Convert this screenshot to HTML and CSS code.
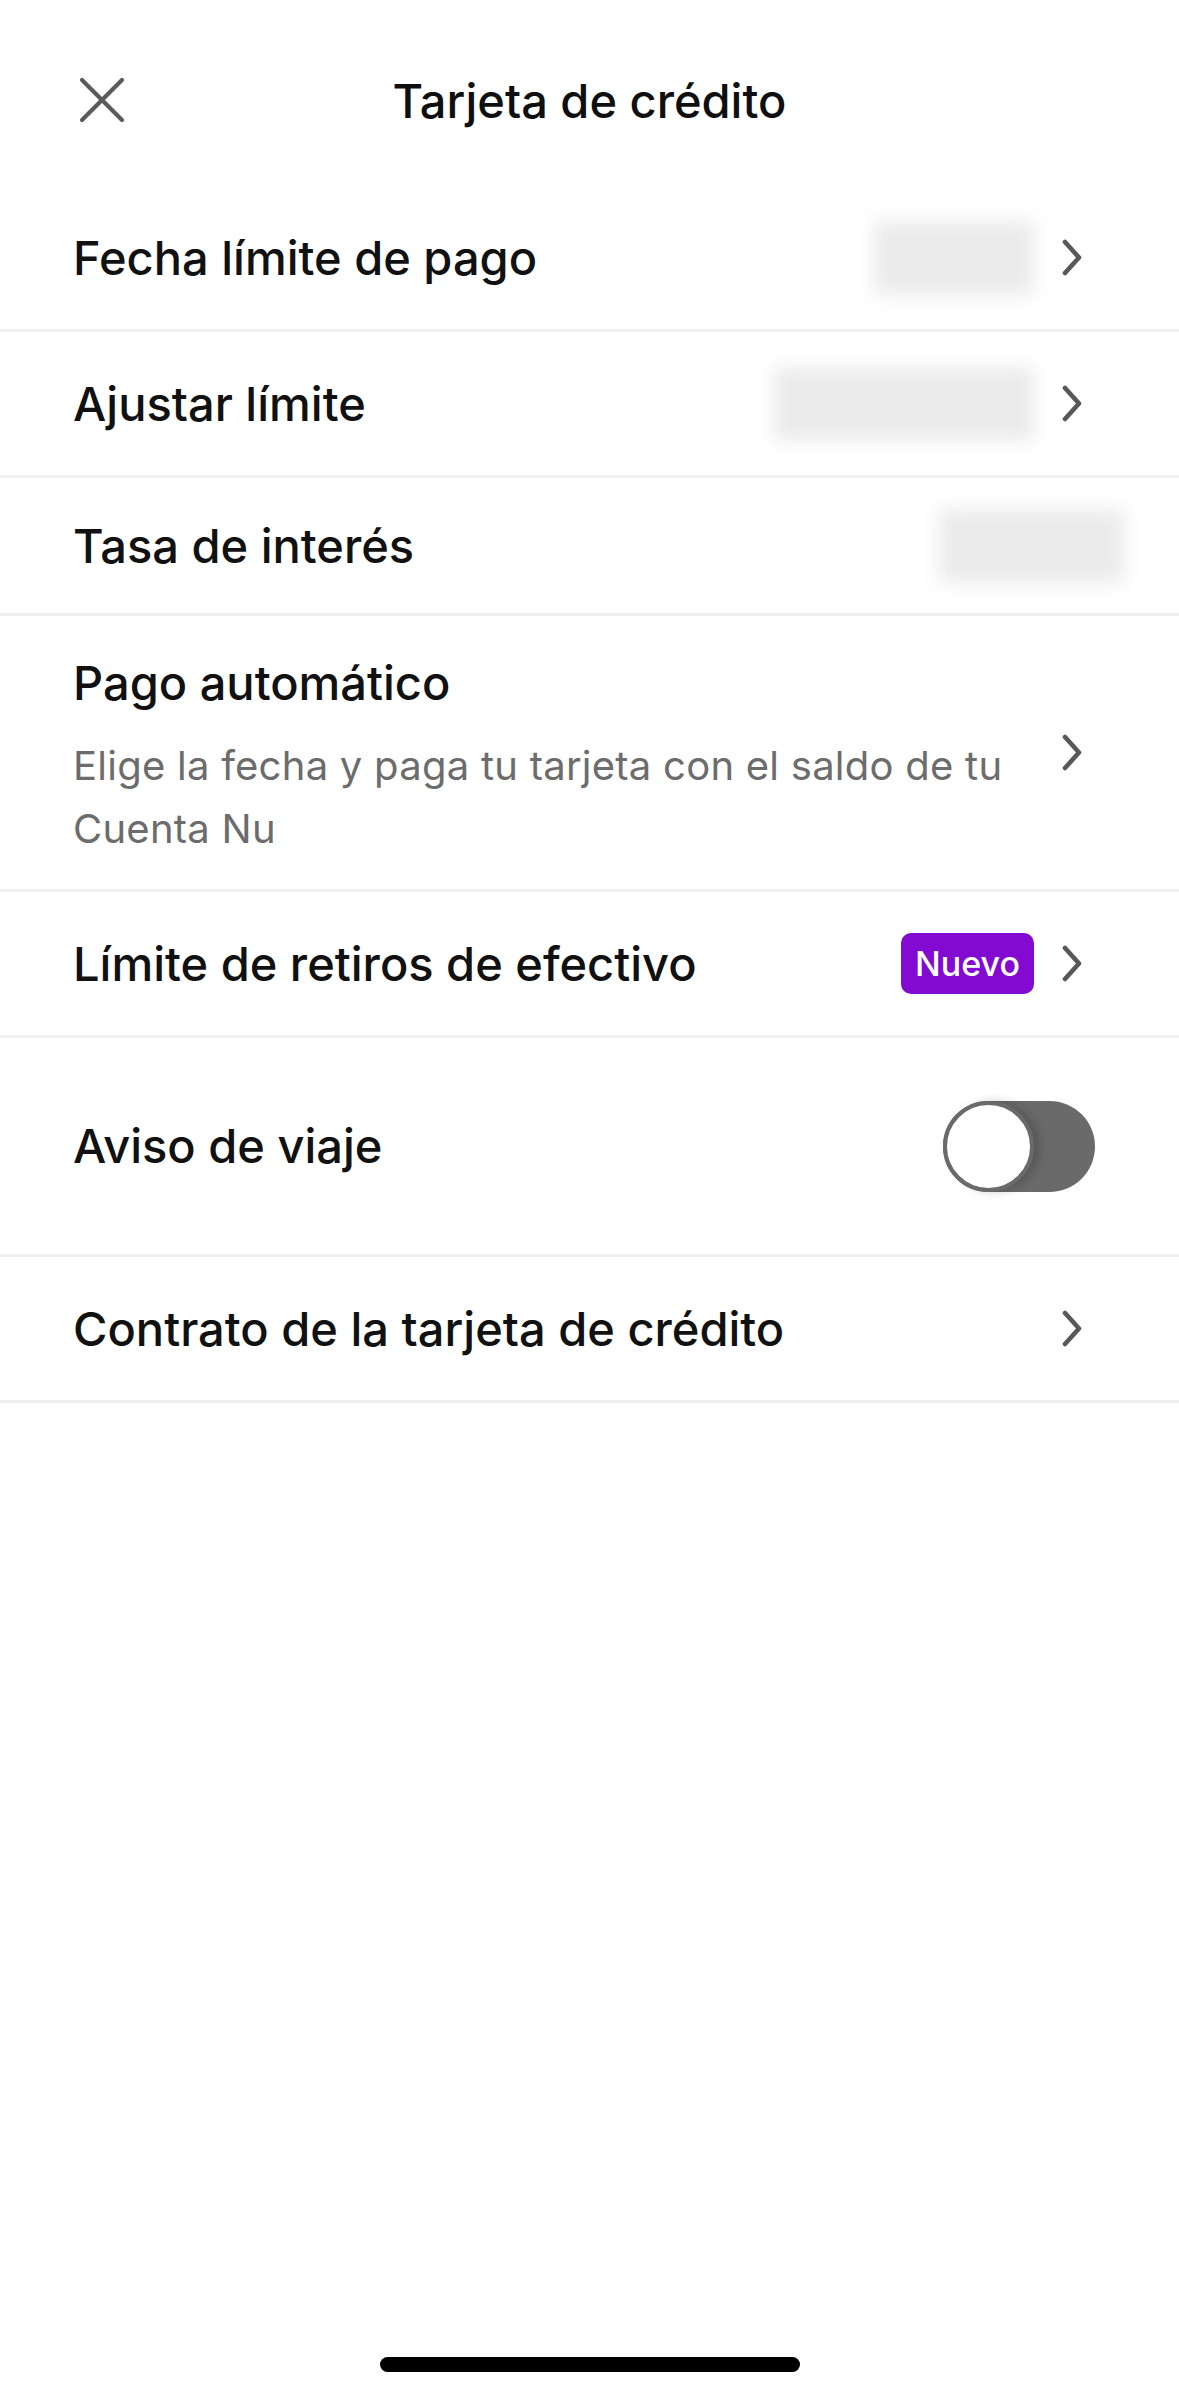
FILE: index.html
```html
<!DOCTYPE html>
<html lang="es">
<head>
  <meta charset="UTF-8" />
  <meta name="viewport" content="width=device-width, initial-scale=1" />
  <title>Tarjeta de crédito</title>
  <link rel="stylesheet" href="styles.css">
</head>
<body>
  <div class="screen">
    <header class="topbar">
      <button class="close-btn" aria-label="Cerrar">
        <svg width="46" height="46" viewBox="0 0 46 46">
          <path d="M3 3 L43 43 M43 3 L3 43" stroke="#5b5b5b" stroke-width="4.2" stroke-linecap="round" fill="none"/>
        </svg>
      </button>
      <h1 class="topbar-title">Tarjeta de crédito</h1>
    </header>

    <ul class="settings">
      <li class="row">
        <span class="label">Fecha límite de pago</span>
        <span class="redacted redacted-date"></span>
        <span class="chevron"><svg width="20" height="37" viewBox="0 0 20 37"><path d="M3 3 L17 18.5 L3 34" stroke="#585858" stroke-width="4.6" stroke-linecap="round" stroke-linejoin="round" fill="none"/></svg></span>
      </li>
      <li class="row">
        <span class="label">Ajustar límite</span>
        <span class="redacted redacted-limit"></span>
        <span class="chevron"><svg width="20" height="37" viewBox="0 0 20 37"><path d="M3 3 L17 18.5 L3 34" stroke="#585858" stroke-width="4.6" stroke-linecap="round" stroke-linejoin="round" fill="none"/></svg></span>
      </li>
      <li class="row row-plain">
        <span class="label">Tasa de interés</span>
        <span class="redacted redacted-rate"></span>
      </li>
      <li class="row row-tall">
        <div class="label-stack">
          <span class="label">Pago automático</span>
          <span class="hint">Elige la fecha y paga tu tarjeta con el saldo de tu Cuenta Nu</span>
        </div>
        <span class="chevron"><svg width="20" height="37" viewBox="0 0 20 37"><path d="M3 3 L17 18.5 L3 34" stroke="#585858" stroke-width="4.6" stroke-linecap="round" stroke-linejoin="round" fill="none"/></svg></span>
      </li>
      <li class="row">
        <span class="label">Límite de retiros de efectivo</span>
        <span class="badge">Nuevo</span>
        <span class="chevron"><svg width="20" height="37" viewBox="0 0 20 37"><path d="M3 3 L17 18.5 L3 34" stroke="#585858" stroke-width="4.6" stroke-linecap="round" stroke-linejoin="round" fill="none"/></svg></span>
      </li>
      <li class="row row-toggle">
        <span class="label">Aviso de viaje</span>
        <span class="toggle" role="switch" aria-checked="false"><span class="toggle-knob"></span></span>
      </li>
      <li class="row">
        <span class="label">Contrato de la tarjeta de crédito</span>
        <span class="chevron"><svg width="20" height="37" viewBox="0 0 20 37"><path d="M3 3 L17 18.5 L3 34" stroke="#585858" stroke-width="4.6" stroke-linecap="round" stroke-linejoin="round" fill="none"/></svg></span>
      </li>
    </ul>

    <div class="spacer"></div>
    <div class="home-indicator"></div>
  </div>
</body>
</html>
```

FILE: styles.css
```css
html, body {
  margin: 0;
  padding: 0;
  background: #ffffff;
  font-family: Inter, 'Noto Sans', sans-serif;
  color: #111111;
}

.screen {
  width: 1179px;
  min-height: 2396px;
  display: flex;
  flex-direction: column;
}

/* === Top bar === */
.topbar {
  height: 186px;
  box-sizing: border-box;
  padding-top: 12px;
  display: flex;
  align-items: center;
  justify-content: center;
  position: relative;
}

.close-btn {
  position: absolute;
  left: 79px;
  top: 77px;
  width: 46px;
  height: 46px;
  padding: 0;
  border: 0;
  background: none;
  display: flex;
}

.topbar-title {
  margin: 0;
  font-size: 47px;
  font-weight: 500;
  letter-spacing: 0;
  color: #0f0f0f;
  margin-top: 2px;
}

/* === Settings list === */
.settings {
  list-style: none;
  margin: 0;
  padding: 0;
}

.row {
  display: flex;
  align-items: center;
  min-height: 143px;
  padding: 0 97px 0 73px;
  border-bottom: 3px solid #efefef;
  gap: 28px;
}

.row-plain {
  min-height: 135px;
  padding-right: 55px;
}

.row-tall {
  min-height: 273px;
}

.row-toggle {
  min-height: 216px;
  padding-right: 84px;
}

.label {
  flex: 1;
  font-size: 47px;
  line-height: 56px;
  font-weight: 500;
  letter-spacing: 0;
  color: #111111;
}

.label-stack {
  flex: 1;
  display: flex;
  flex-direction: column;
  gap: 23px;
  padding: 10px 0 0;
}

.hint {
  font-size: 40px;
  line-height: 63px;
  font-weight: 400;
  letter-spacing: 0.25px;
  color: #6c6c6c;
  padding-right: 20px;
}

.chevron {
  width: 20px;
  display: flex;
  flex-shrink: 0;
}

/* Hidden (blurred) values */
.redacted {
  height: 74px;
  background: #ebebeb;
  filter: blur(9px);
  flex-shrink: 0;
}

.redacted-date { width: 160px; }
.redacted-limit { width: 260px; }
.redacted-rate { width: 185px; }

.badge {
  flex-shrink: 0;
  background: #820ad1;
  color: #ffffff;
  font-size: 34px;
  font-weight: 500;
  line-height: 61px;
  padding: 0 14px;
  border-radius: 10px;
  letter-spacing: 0;
}

/* Switch */
.toggle {
  width: 152px;
  height: 91px;
  border-radius: 46px;
  background: #6a6a6a;
  display: flex;
  align-items: center;
  flex-shrink: 0;
}

.toggle-knob {
  width: 83px;
  height: 83px;
  border-radius: 50%;
  background: #ffffff;
  border: 4px solid #6a6a6a;
  box-shadow: 6px 0 10px rgba(0, 0, 0, 0.18);
}

/* Home indicator */
.spacer { flex: 1; }

.home-indicator {
  width: 420px;
  height: 15px;
  border-radius: 8px;
  background: #000000;
  align-self: center;
  margin-bottom: 24px;
}
```
